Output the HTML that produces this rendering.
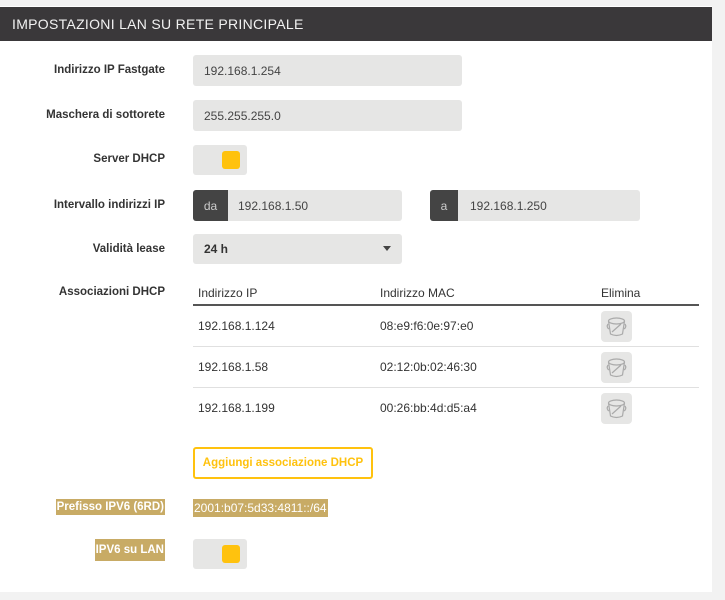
<!DOCTYPE html>
<html><head><style>
*{box-sizing:border-box;margin:0;padding:0}
body{width:725px;height:600px;background:#f2f2f2;font-family:"Liberation Sans",sans-serif;position:relative;overflow:hidden;color:#333}
.card{position:absolute;left:0;top:6px;width:712px;height:586px;background:#fff}
.hdr{position:absolute;left:0;top:7px;width:712px;height:34px;background:#3a383a;color:#f2f2f2;font-size:14px;letter-spacing:.3px;padding:9px 12px}
.lbl{position:absolute;right:560px;font-size:11.5px;font-weight:bold;color:#333;text-align:right;white-space:nowrap}
.f{position:absolute;background:#e6e6e5;border-radius:3px;font-size:12px;color:#444;padding-left:11px;display:flex;align-items:center}
.pre{position:absolute;background:#444;color:#ccc;font-size:12px;border-radius:3px 0 0 3px;display:flex;align-items:center;justify-content:center}
.tog{position:absolute;left:193px;width:54px;height:30px;background:#e6e6e5;border-radius:3px}
.tog i{position:absolute;left:29px;top:6px;width:18px;height:18px;background:#ffc20e;border-radius:3px}
.t{position:absolute;font-size:12px;color:#333}
.line{position:absolute;left:193px;width:506px;height:1px;background:#e0e0e0}
.ico{position:absolute;left:601px;width:31px;height:31px;background:#e6e6e5;border-radius:4px}
.hl{background:#c8ab65;color:#fff;padding:2px 1px}
</style></head><body>
<div class="card"></div>
<div class="hdr">IMPOSTAZIONI LAN SU RETE PRINCIPALE</div>

<div class="lbl" style="top:64px">Indirizzo IP Fastgate</div>
<div class="f" style="left:193px;top:55px;width:269px;height:31px">192.168.1.254</div>
<div class="lbl" style="top:109px">Maschera di sottorete</div>
<div class="f" style="left:193px;top:100px;width:269px;height:31px">255.255.255.0</div>
<div class="lbl" style="top:153px">Server DHCP</div>
<div class="tog" style="top:145px"><i></i></div>
<div class="lbl" style="top:199px">Intervallo indirizzi IP</div>
<div class="f" style="left:193px;top:190px;width:209px;height:31px;padding-left:45px">192.168.1.50</div>
<div class="pre" style="left:193px;top:190px;width:35px;height:31px">da</div>
<div class="f" style="left:430px;top:190px;width:210px;height:31px;padding-left:40px">192.168.1.250</div>
<div class="pre" style="left:430px;top:190px;width:28px;height:31px">a</div>
<div class="lbl" style="top:243px">Validità lease</div>
<div class="f" style="left:193px;top:234px;width:209px;height:30px;font-weight:bold;color:#333">24 h<span style="position:absolute;right:11px;top:12px;border-left:4px solid transparent;border-right:4px solid transparent;border-top:5px solid #444"></span></div>

<div class="lbl" style="top:286px">Associazioni DHCP</div>
<div class="t" style="left:198px;top:286px">Indirizzo IP</div>
<div class="t" style="left:380px;top:286px">Indirizzo MAC</div>
<div class="t" style="left:601px;top:286px">Elimina</div>
<div class="line" style="top:304px;height:2px;background:#555"></div>
<div class="t" style="left:198px;top:319px">192.168.1.124</div>
<div class="t" style="left:380px;top:319px">08:e9:f6:0e:97:e0</div>
<div class="ico" style="top:311px"><svg width="31" height="31" viewBox="0 0 31 31" fill="none" stroke="#aaa" stroke-width="1.2"><ellipse cx="15.5" cy="10" rx="8" ry="3"/><path d="M7.5 10 L9.5 23 Q15.5 26 21.5 23 L23.5 10 M11 21 L20 13"/><path d="M7 13 Q5 16 8 18 M24 13 Q26 16 23 18"/></svg></div>
<div class="line" style="top:346px"></div>
<div class="t" style="left:198px;top:360px">192.168.1.58</div>
<div class="t" style="left:380px;top:360px">02:12:0b:02:46:30</div>
<div class="ico" style="top:352px"><svg width="31" height="31" viewBox="0 0 31 31" fill="none" stroke="#aaa" stroke-width="1.2"><ellipse cx="15.5" cy="10" rx="8" ry="3"/><path d="M7.5 10 L9.5 23 Q15.5 26 21.5 23 L23.5 10 M11 21 L20 13"/><path d="M7 13 Q5 16 8 18 M24 13 Q26 16 23 18"/></svg></div>
<div class="line" style="top:387px"></div>
<div class="t" style="left:198px;top:401px">192.168.1.199</div>
<div class="t" style="left:380px;top:401px">00:26:bb:4d:d5:a4</div>
<div class="ico" style="top:393px"><svg width="31" height="31" viewBox="0 0 31 31" fill="none" stroke="#aaa" stroke-width="1.2"><ellipse cx="15.5" cy="10" rx="8" ry="3"/><path d="M7.5 10 L9.5 23 Q15.5 26 21.5 23 L23.5 10 M11 21 L20 13"/><path d="M7 13 Q5 16 8 18 M24 13 Q26 16 23 18"/></svg></div>

<div style="position:absolute;left:193px;top:447px;width:180px;height:32px;border:2px solid #ffc20e;border-radius:3px;color:#ffc20e;font-size:11.5px;font-weight:bold;display:flex;align-items:center;justify-content:center">Aggiungi associazione DHCP</div>

<div class="lbl" style="top:501px"><span class="hl">Prefisso IPV6 (6RD)</span></div>
<div class="t" style="left:193px;top:501px"><span class="hl" style="font-size:12px">2001:b07:5d33:4811::/64</span></div>
<div class="lbl" style="top:544px"><span class="hl" style="padding:5px 1px">IPV6 su LAN</span></div>
<div class="tog" style="top:539px"><i></i></div>
</body></html>
